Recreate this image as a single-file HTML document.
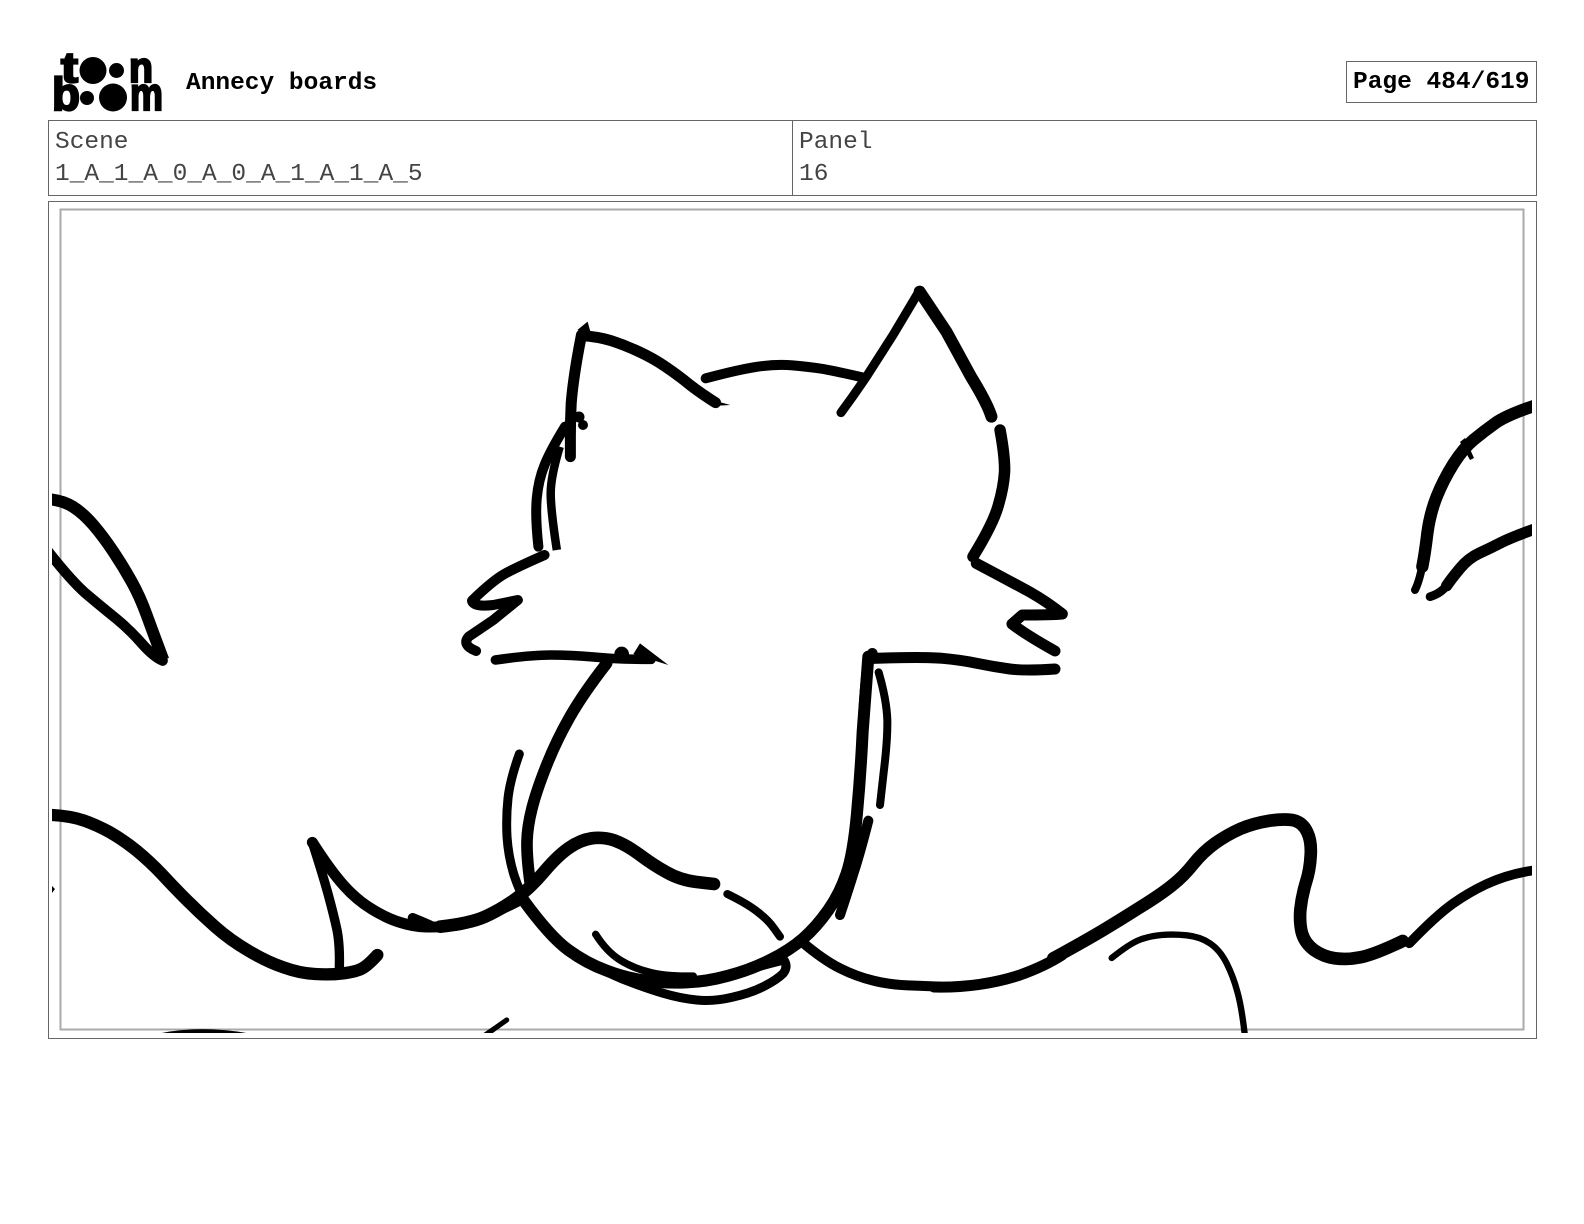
<!DOCTYPE html>
<html>
<head>
<meta charset="utf-8">
<title>Annecy boards</title>
<style>
html,body{margin:0;padding:0;background:#fff;width:1584px;height:1224px;overflow:hidden}
svg{display:block;position:absolute;left:0;top:0}
.m{font-family:"Liberation Mono",monospace;font-size:24.5px}
.b{font-weight:bold;fill:#000}
.r{fill:#444}
.s path{fill:none;stroke:#000;stroke-linecap:round;stroke-linejoin:round}
.h path{vector-effect:non-scaling-stroke}
.l{font-family:"Liberation Sans",sans-serif;font-weight:bold;fill:#000;stroke:#000}
</style>
</head>
<body>
<svg width="1584" height="1224" viewBox="0 0 1584 1224" xmlns="http://www.w3.org/2000/svg">
<defs><clipPath id="c"><rect x="52" y="209" width="1480" height="824"/></clipPath></defs>
<rect width="1584" height="1224" fill="#fff"/>

<!-- logo -->
<text class="l" x="61" y="82" font-size="43" stroke-width="2.2" textLength="17" lengthAdjust="spacingAndGlyphs">t</text>
<circle cx="93" cy="70.5" r="13.5"/>
<circle cx="116.5" cy="70.5" r="7.5"/>
<text class="l" x="129" y="82" font-size="43" stroke-width="2.2" textLength="24" lengthAdjust="spacingAndGlyphs">n</text>
<text class="l" x="52" y="110" font-size="46" stroke-width="2.2" textLength="28" lengthAdjust="spacingAndGlyphs">b</text>
<circle cx="87" cy="98" r="7"/>
<circle cx="113" cy="97.5" r="14"/>
<text class="l" x="130" y="110" font-size="46" stroke-width="2.2" textLength="33" lengthAdjust="spacingAndGlyphs">m</text>

<text class="m b" x="186" y="89">Annecy boards</text>

<rect x="1346.5" y="61.5" width="190" height="41" fill="#fff" stroke="#666"/>
<text class="m b" x="1353" y="88">Page 484/619</text>

<rect x="48.5" y="120.5" width="1488" height="75" fill="#fff" stroke="#666"/>
<line x1="792.5" y1="120" x2="792.5" y2="195" stroke="#666"/>
<text class="m r" x="55" y="148">Scene</text>
<text class="m r" x="55" y="180">1_A_1_A_0_A_0_A_1_A_1_A_5</text>
<text class="m r" x="799" y="148">Panel</text>
<text class="m r" x="799" y="180">16</text>

<rect x="48.5" y="201.5" width="1488" height="837" fill="#fff" stroke="#666"/>
<rect x="60.5" y="209.5" width="1463" height="820" fill="none" stroke="#aaa" stroke-width="2"/>

<g clip-path="url(#c)" class="s">
<!-- head / whiskers -->
<g class="h" transform="translate(440 270) scale(.41 .33333)">
<path stroke-width="11" d="M345 197 Q385 200 417 212 Q450 225 485 245 Q520 265 550 290 Q580 315 605 340 Q630 365 672 398"/>
<path stroke-width="11" d="M345 195 Q325 320 320 400 Q318 450 318 500 L318 560"/>
<path stroke-width="10" d="M305 470 Q270 540 255 585 Q240 630 236 685 Q232 740 240 830"/>
<path stroke-width="8.5" style="stroke-linecap:butt" d="M292 530 Q270 620 270 670 Q270 720 285 840"/>
<path stroke-width="10" d="M255 855 Q190 890 160 910 Q130 930 78 992 Q82 1012 130 1005 L190 990 L130 1050 L70 1100 Q52 1125 88 1143"/>
<path stroke-width="9.5" d="M135 1170 Q220 1155 270 1155 Q320 1155 375 1161 Q430 1168 515 1168"/>
<path stroke-width="10" d="M648 325 Q730 298 775 290 Q820 282 860 286 Q900 290 935 297 Q970 305 1030 322"/>
<path stroke-width="9" d="M978 428 Q1010 375 1040 320 L1105 195 L1168 65"/>
<path stroke-width="12" d="M1170 65 L1235 185 L1295 320 Q1335 400 1345 440"/>
<path stroke-width="11.5" d="M1366 480 Q1378 560 1377 605 Q1375 650 1362 705 Q1350 760 1300 860"/>
<path stroke-width="11" d="M1308 880 Q1400 940 1440 967 Q1480 995 1518 1032 Q1490 1035 1420 1035 L1395 1062 Q1430 1095 1500 1143"/>
<path stroke-width="11" d="M1055 1165 Q1180 1160 1225 1165 Q1270 1170 1310 1180 Q1350 1190 1390 1197 Q1430 1203 1500 1197"/>
<polygon points="335,180 360,155 368,190"/>
<polygon points="650,385 708,405 665,408"/>
<polygon points="1285,860 1310,845 1310,870"/>
</g>
<circle cx="579" cy="417" r="5.5"/><circle cx="583" cy="425" r="5"/>
<!-- body -->
<g transform="translate(440 640) scale(.33333)">
<circle cx="545" cy="42" r="22"/>
<polygon points="600,10 685,75 580,42"/>
<circle cx="1297" cy="40" r="16"/>
<path stroke-width="35" d="M500 70 Q430 160 390 230 Q350 300 320 375 Q290 450 276 505 Q262 560 261 605 Q260 650 270 725"/>
<path stroke-width="27" d="M238 342 Q210 420 204 475 Q198 530 201 590 Q205 650 222 705 Q240 760 270 810"/>
<path stroke-width="36" d="M250 780 Q330 890 385 930 Q440 970 500 992 Q560 1015 620 1022 Q680 1030 740 1027 Q800 1025 865 1007 Q930 990 990 960 Q1050 930 1090 895 Q1130 860 1165 810 Q1200 760 1220 700 Q1240 640 1251 520 Q1262 400 1268 275 L1285 50"/>
<path stroke-width="28" d="M1285 50 Q1268 150 1262 400"/>
<path stroke-width="27" d="M380 930 Q500 1000 560 1022 Q620 1045 670 1060 Q720 1075 770 1080 Q820 1085 875 1072 Q930 1060 970 1040 Q1010 1020 1030 1000 Q1045 980 1032 960 Q950 980 900 998 Q850 1015 800 1022"/>
<path stroke-width="22" d="M467 883 Q500 935 540 960 Q580 985 630 997 Q680 1010 760 1008"/>
<path stroke-width="38" d="M0 860 Q90 850 135 830 Q180 810 225 778 Q270 745 310 698 Q350 650 385 625 Q420 600 455 595 Q490 590 525 602 Q560 615 600 645 Q640 675 680 697 Q720 720 770 726 L822 732"/>
<path stroke-width="24" d="M862 762 Q920 790 952 815 Q985 840 1002 865 L1020 890"/>
<path stroke-width="24" d="M1316 97 Q1340 180 1342 240 Q1343 300 1331 397 L1320 495"/>
<path stroke-width="30" d="M1285 542 Q1260 640 1242 695 Q1225 750 1200 825"/>
<path stroke-width="30" d="M1085 905 Q1150 960 1200 985 Q1250 1010 1300 1022 Q1350 1035 1425 1037 L1500 1040"/>
<path stroke-width="15" d="M200 1140 L140 1183"/>
</g>
<!-- bottom connection to hill -->
<path stroke-width="11" d="M934 987 Q980 988 1020 975 Q1045 966 1062 955"/>
<!-- left ground -->
<g transform="translate(40 780) scale(.33333)">
<path stroke-width="37" d="M36 105 Q90 108 130 121 Q170 135 210 157 Q250 180 290 212 Q330 245 365 282 Q400 320 440 360 Q480 400 525 440 Q570 480 625 512 Q680 545 730 562 Q780 580 825 582 Q870 585 910 580 Q950 575 967 565 Q985 555 1012 525"/>
<path stroke-width="28" d="M817 187 Q850 290 865 345 Q880 400 890 445 Q900 490 898 565"/>
<path stroke-width="33" d="M817 187 Q870 270 910 315 Q950 360 995 387 Q1040 415 1080 427 Q1120 440 1160 441 Q1200 442 1250 436 Q1300 430 1430 365"/>
<path stroke-width="30" d="M1118 414 Q1145 425 1170 436"/>
<path stroke-width="30" d="M340 780 Q480 745 650 780"/>
<path stroke-width="15" d="M1335 765 L1400 720"/>
</g>
<polygon points="52,886 55,889 52,893"/>
<!-- right ground -->
<g transform="translate(1060 780) scale(.33333)">
<path stroke-width="38" d="M-20 535 Q80 480 130 450 Q180 420 240 382 Q300 345 335 317 Q370 290 400 252 Q430 215 465 190 Q500 165 540 147 Q580 130 630 122 Q680 115 705 122 Q730 130 742 157 Q755 185 752 227 Q750 270 737 310 Q725 350 721 390 Q718 430 726 460 Q735 490 762 510 Q790 530 825 535 Q860 540 900 532 Q940 525 1028 483"/>
<path stroke-width="29" d="M1048 490 Q1130 405 1180 370 Q1230 335 1280 312 Q1350 280 1430 270"/>
<path stroke-width="19" d="M155 534 Q210 490 240 479 Q270 468 305 465 Q340 462 380 466 Q420 470 450 490 Q480 510 500 550 Q520 590 532 635 Q545 680 555 770"/>
</g>
<!-- left edge shape -->
<g transform="translate(40 470) scale(.33333)">
<path stroke-width="36" style="stroke-linecap:butt" d="M30 88 Q70 92 100 111 Q130 130 160 165 Q190 200 220 245 Q250 290 275 335 Q300 380 320 435 Q340 490 370 570"/>
<path stroke-width="31" d="M25 245 Q100 340 145 377 Q190 415 230 447 Q270 480 305 520 Q340 560 368 572"/>
</g>
<!-- right edge shape -->
<g transform="translate(1380 380) scale(.33333)">
<path stroke-width="37" d="M470 75 Q380 105 345 130 Q310 155 280 180 Q250 205 220 252 Q190 300 170 350 Q150 400 142 460 Q135 520 127 560"/>
<path stroke-width="24" d="M130 540 Q120 600 105 630"/>
<path stroke-width="34" d="M470 445 Q400 470 365 487 Q330 505 297 520 Q265 535 240 565 Q215 595 200 617"/>
<path stroke-width="26" d="M205 610 Q185 640 150 650"/>
</g>
<polygon points="1460,442 1465,438 1474,458 1470,460"/>
</g>
</svg>
</body>
</html>
